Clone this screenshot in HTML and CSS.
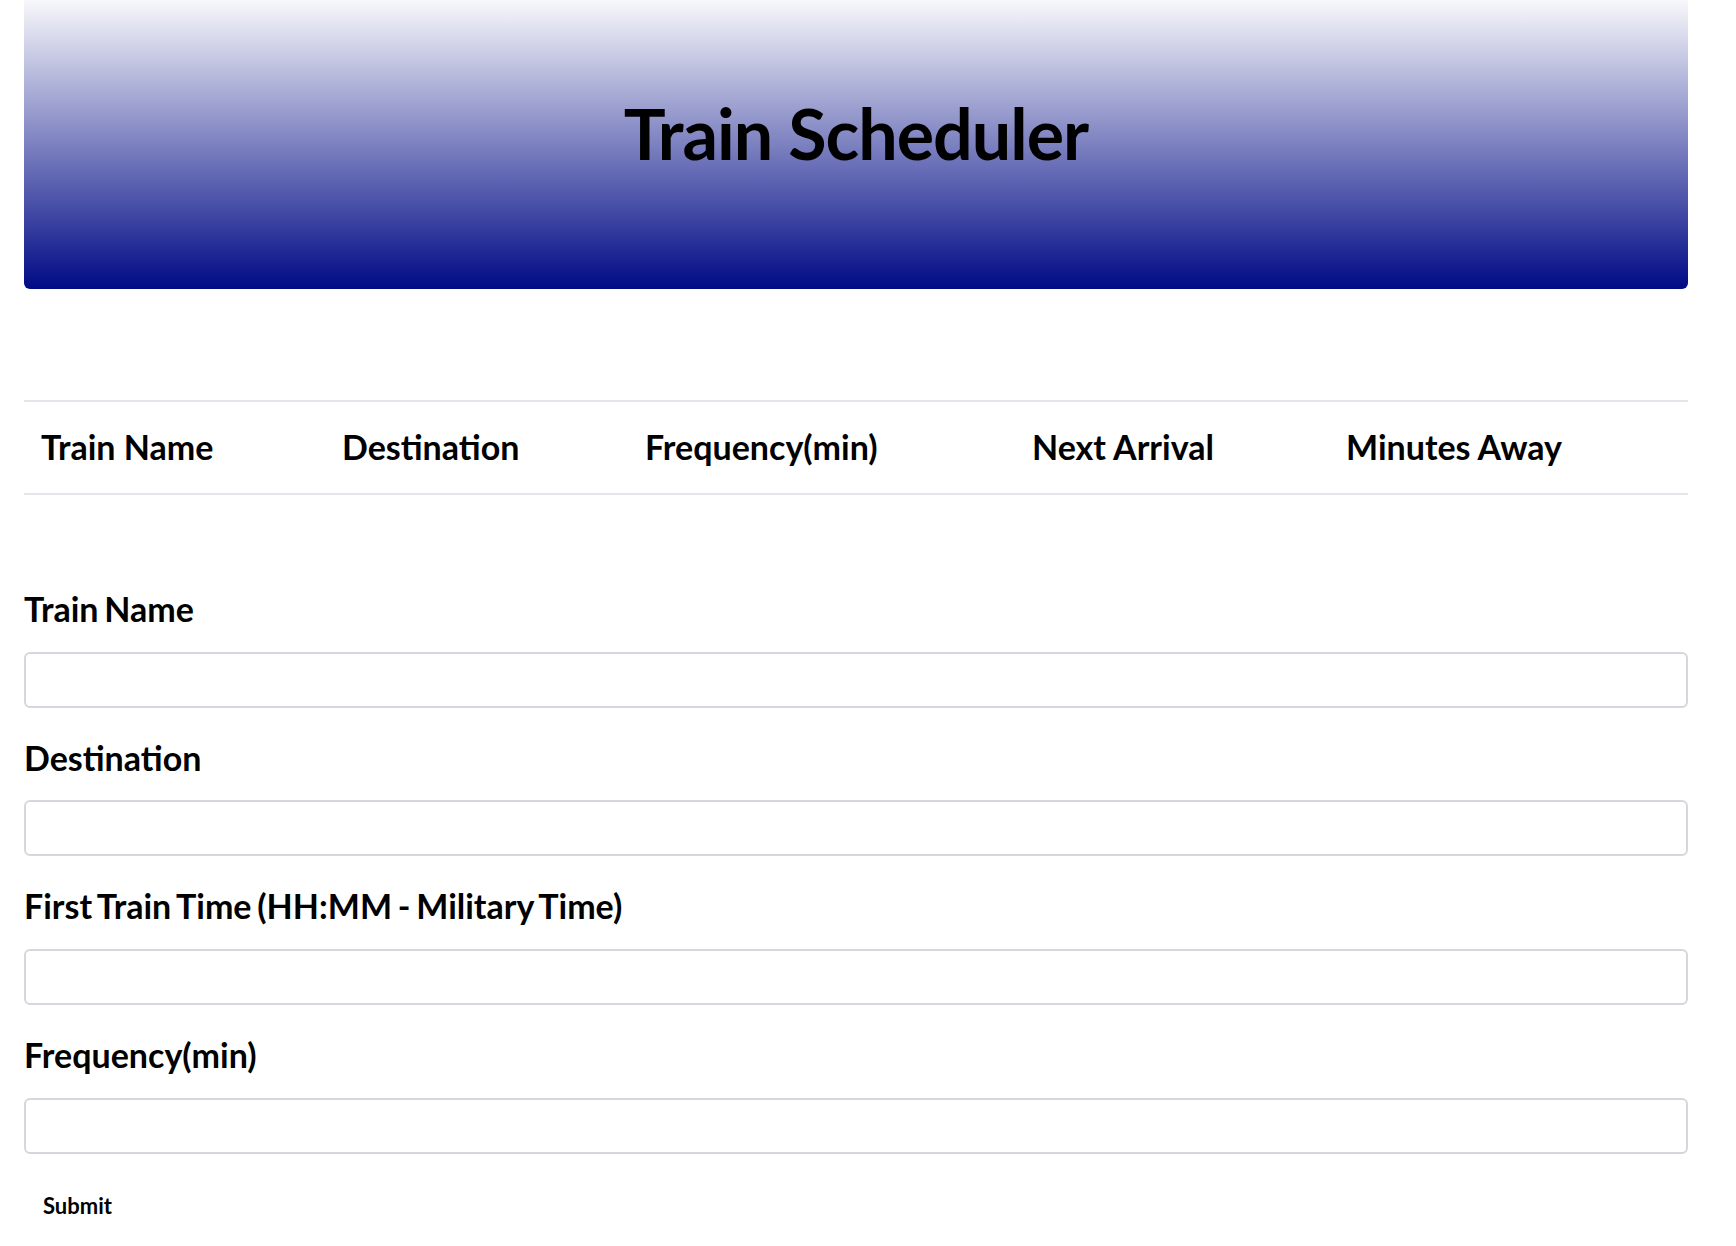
FILE: index.html
```html
<!DOCTYPE html>
<html lang="en">
<head>
<meta charset="utf-8">
<title>Train Scheduler</title>
<link rel="stylesheet" href="styles.css">
</head>
<body>
<div class="container">
  <header class="jumbotron">
    <h1 class="title">Train Scheduler</h1>
  </header>

  <table class="schedule">
    <thead>
      <tr>
        <th class="col-name">Train Name</th>
        <th class="col-dest">Destination</th>
        <th class="col-freq">Frequency(min)</th>
        <th class="col-next">Next Arrival</th>
        <th class="col-away">Minutes Away</th>
      </tr>
    </thead>
    <tbody></tbody>
  </table>

  <form class="train-form">
    <div class="form-group">
      <label class="form-label" for="train-name">Train Name</label>
      <input class="form-input" id="train-name" type="text">
    </div>
    <div class="form-group">
      <label class="form-label" for="destination">Destination</label>
      <input class="form-input" id="destination" type="text">
    </div>
    <div class="form-group">
      <label class="form-label" for="first-time">First Train Time (HH:MM - Military Time)</label>
      <input class="form-input" id="first-time" type="text">
    </div>
    <div class="form-group">
      <label class="form-label" for="frequency">Frequency(min)</label>
      <input class="form-input" id="frequency" type="text">
    </div>
    <button class="submit-btn" type="button">Submit</button>
  </form>
</div>
</body>
</html>
```

FILE: styles.css
```css
* {
  box-sizing: border-box;
}

html, body {
  margin: 0;
  padding: 0;
  background: #ffffff;
  color: #000000;
  font-family: "Lato", "Open Sans", "DejaVu Sans", sans-serif;
}

.container {
  width: 1688px;
  padding-left: 24px;
}

.jumbotron {
  height: 289px;
  padding-top: 91px;
  background: linear-gradient(to bottom, #f8f8fb 0%, #000a85 100%);
  border-radius: 0 0 6px 6px;
  text-align: center;
}

.title {
  margin: 0;
  font-size: 70px;
  font-weight: 700;
  line-height: 1.2;
  letter-spacing: -1px;
}

.schedule {
  width: 100%;
  margin-top: 111px;
  border-collapse: collapse;
  table-layout: fixed;
}

.schedule th {
  text-align: left;
  font-size: 34px;
  font-weight: 700;
  line-height: 1.2;
  padding: 25px 0 25px 17px;
  border-top: 2px solid #e2e5e9;
  border-bottom: 2px solid #e2e5e9;
  white-space: nowrap;
}

.col-name { width: 301px; }
.col-dest { width: 303px; }
.col-freq { width: 387px; }
.col-next { width: 314px; }
.col-away { width: auto; }

.train-form {
  margin-top: 94px;
  padding-bottom: 30px;
}

.form-group {
  margin-bottom: 30px;
}

.form-label {
  display: block;
  font-size: 34px;
  font-weight: 700;
  line-height: 1.2;
  margin-bottom: 22px;
  word-spacing: -2.5px;
}

.form-input {
  display: block;
  width: 100%;
  height: 56px;
  border: 2px solid #d4d8dd;
  border-radius: 6px;
  background: #ffffff;
  font-family: inherit;
  font-size: 22px;
  padding: 0 14px;
}

.submit-btn {
  display: block;
  margin-top: 39px;
  margin-left: 19px;
  padding: 0;
  border: 0;
  background: none;
  color: #000000;
  font-family: inherit;
  font-size: 22px;
  font-weight: 700;
  line-height: 1.2;
  cursor: pointer;
}
```
